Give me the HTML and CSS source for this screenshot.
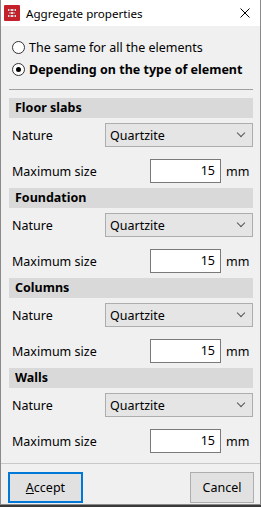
FILE: index.html
```html
<!DOCTYPE html>
<html lang="en">

<head>
    <meta charset="UTF-8">
    <title>Aggregate properties</title>
    <link rel="stylesheet" href="styles.css">
</head>

<body>
    <div class="window">
        <div class="titlebar">
            <svg class="app-icon" width="16" height="16" viewBox="0 0 16 16">
                <rect x="0" y="0" width="16" height="16" rx="1" fill="#c4212b"/>
                <path d="M4 4h8v2H4zM5 7h6v2H5zM4 10h8v2H4z" fill="#e9d6d6"/>
                <path d="M6 4v8M10 4v8" stroke="#9a1a22" stroke-width="1"/>
            </svg>
            <span class="title">Aggregate properties</span>
            <svg class="close" width="10" height="10" viewBox="0 0 10 10">
                <path d="M0.5 0.5L9.5 9.5M9.5 0.5L0.5 9.5" stroke="#000" stroke-width="1"/>
            </svg>
        </div>

        <div class="content">
            <label class="radio-row">
                <span class="radio"></span>
                <span>The same for all the elements</span>
            </label>
            <label class="radio-row bold">
                <span class="radio checked"></span>
                <span>Depending on the type of element</span>
            </label>

            <div class="separator"></div>

            <div class="section">
                <div class="section-header">Floor slabs</div>
                <div class="field-row">
                    <span class="field-label">Nature</span>
                    <div class="combo"><span>Quartzite</span><span class="chevron"></span></div>
                </div>
                <div class="field-row size-row">
                    <span class="field-label">Maximum size</span>
                    <div class="number-input">15</div>
                    <span class="unit">mm</span>
                </div>
            </div>

            <div class="section">
                <div class="section-header">Foundation</div>
                <div class="field-row">
                    <span class="field-label">Nature</span>
                    <div class="combo"><span>Quartzite</span><span class="chevron"></span></div>
                </div>
                <div class="field-row size-row">
                    <span class="field-label">Maximum size</span>
                    <div class="number-input">15</div>
                    <span class="unit">mm</span>
                </div>
            </div>

            <div class="section">
                <div class="section-header">Columns</div>
                <div class="field-row">
                    <span class="field-label">Nature</span>
                    <div class="combo"><span>Quartzite</span><span class="chevron"></span></div>
                </div>
                <div class="field-row size-row">
                    <span class="field-label">Maximum size</span>
                    <div class="number-input">15</div>
                    <span class="unit">mm</span>
                </div>
            </div>

            <div class="section">
                <div class="section-header">Walls</div>
                <div class="field-row">
                    <span class="field-label">Nature</span>
                    <div class="combo"><span>Quartzite</span><span class="chevron"></span></div>
                </div>
                <div class="field-row size-row">
                    <span class="field-label">Maximum size</span>
                    <div class="number-input">15</div>
                    <span class="unit">mm</span>
                </div>
            </div>
        </div>

        <div class="footer">
            <button class="btn btn-default"><u>A</u>ccept</button>
            <button class="btn">Cancel</button>
        </div>
    </div>
</body>

</html>
```

FILE: styles.css
```css
body {
    margin: 0;
    padding: 0;
    font-family: "Noto Sans", "Liberation Sans", sans-serif;
    font-size: 12.5px;
    color: #000;
    background-color: #3a3a3a;
}

.window {
    width: 259px;
    height: 504px;
    background-color: #f0f0f0;
    border: 1px solid #8a8a8a;
    border-top: none;
    display: flex;
    flex-direction: column;
}

.titlebar {
    height: 26px;
    background-color: #fff;
    display: flex;
    align-items: center;
    padding: 0 10px 0 3px;
}

.app-icon {
    margin-right: 6px;
}

.title {
    flex: 1;
    font-size: 11.6px;
}

.content {
    padding: 10px 7px 0 8px;
    flex: 1;
}

.radio-row {
    display: flex;
    align-items: center;
    height: 22px;
    padding-left: 3px;
}

.radio-row.bold {
    font-weight: bold;
}

.radio {
    width: 11px;
    height: 11px;
    border: 1px solid #333;
    border-radius: 50%;
    background-color: #fff;
    margin-right: 4px;
    position: relative;
    flex-shrink: 0;
}

.radio.checked::after {
    content: "";
    position: absolute;
    left: 3px;
    top: 3px;
    width: 5px;
    height: 5px;
    border-radius: 50%;
    background-color: #000;
}

.separator {
    height: 1px;
    background-color: #a0a0a0;
    margin: 9px 0 8px 0;
}

.section {
    padding-bottom: 5px;
}

.section-header {
    height: 20px;
    line-height: 20px;
    background-color: #d9d9d9;
    font-weight: bold;
    padding-left: 6px;
}

.field-row {
    display: flex;
    align-items: center;
    margin-top: 5px;
    height: 24px;
    padding-left: 3px;
}

.size-row {
    margin-top: 12px;
}

.field-label {
    width: 93px;
    flex-shrink: 0;
}

.combo {
    flex: 1;
    height: 22px;
    border: 1px solid #adadad;
    background-color: #e5e5e5;
    display: flex;
    align-items: center;
    justify-content: space-between;
    padding: 0 8px 0 4px;
}

.chevron {
    width: 5px;
    height: 5px;
    border-right: 1px solid #555;
    border-bottom: 1px solid #555;
    transform: rotate(45deg);
    margin-top: -4px;
}

.number-input {
    margin-left: 45px;
    width: 64px;
    height: 22px;
    line-height: 22px;
    border: 1px solid #7a7a7a;
    background-color: #fff;
    text-align: right;
    padding-right: 5px;
}

.unit {
    margin-left: 5px;
}

.footer {
    border-top: 1px solid #c8c8c8;
    height: 41px;
    display: flex;
    justify-content: space-between;
    align-items: flex-start;
    padding: 8px 6px 0 7px;
    box-sizing: border-box;
}

.btn {
    font-family: inherit;
    font-size: 12.5px;
    height: 31px;
    background-color: #e1e1e1;
    border: 1px solid #adadad;
    padding: 0;
    width: 64px;
    color: #000;
}

.btn-default {
    width: 75px;
    border: 2px solid #0078d7;
}
```
